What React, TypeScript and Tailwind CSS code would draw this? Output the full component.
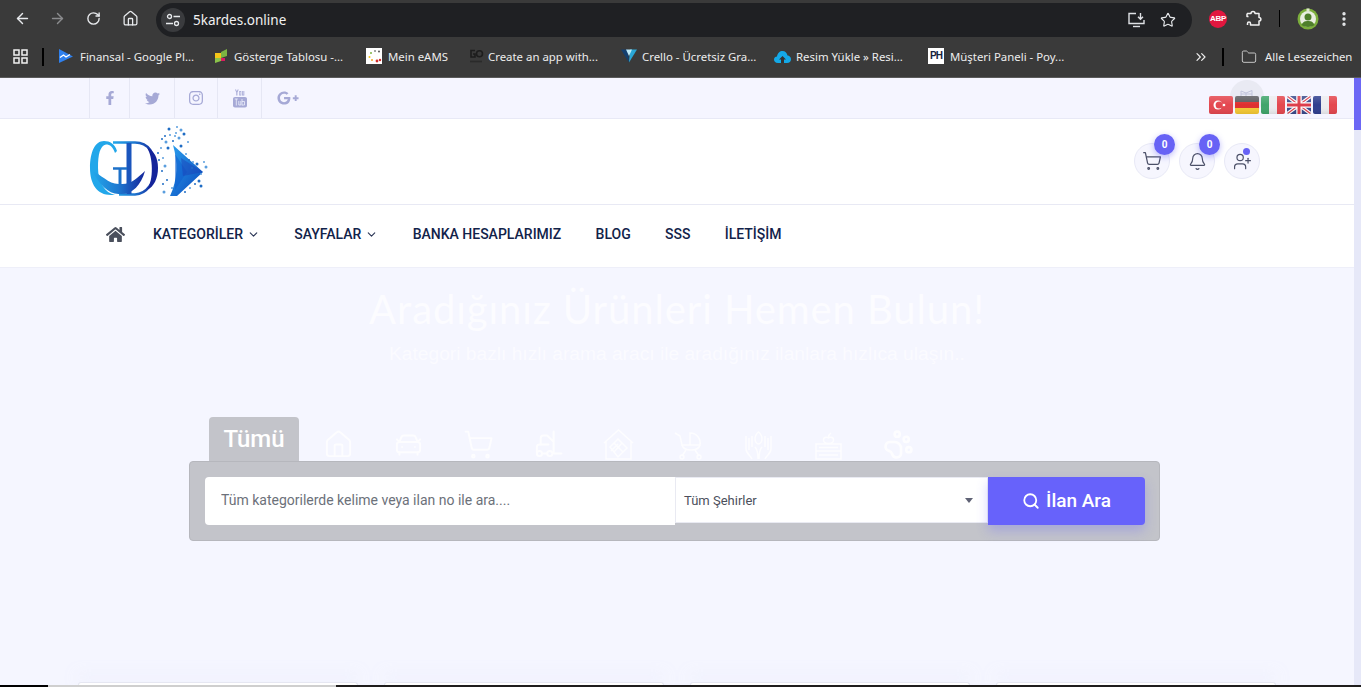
import React from "react";
import { ArrowLeft, ArrowRight, RotateCw, House, Star, EllipsisVertical, ChevronsRight, Folder, ChevronDown, ShoppingCart, Bell, UserPlus, Search, CarFront, Forklift, PawPrint } from "lucide-react";
import { FaFacebookF, FaTwitter, FaInstagram, FaGooglePlusG, FaHome } from "react-icons/fa";

const Tune = () => (
  <svg width="16" height="16" viewBox="0 0 16 16" fill="none" stroke="#e8eaed" strokeWidth="1.3">
    <circle cx="4.5" cy="4.5" r="2" />
    <path d="M8.5 4.5H15M1 11.5H8" />
    <circle cx="11.5" cy="11.5" r="2" />
  </svg>
);

const MonitorArrow = () => (
  <svg width="17" height="16" viewBox="0 0 17 16" fill="none" stroke="#dfe1e5" strokeWidth="1.4">
    <path d="M8 1.500H1V11.500H16V8" />
    <path d="M5 14.500H12" />
    <path d="M12.500 1V7M10 4.800L12.500 7.300L15 4.800" />
  </svg>
);

const Ext = () => (
  <svg width="17" height="17" viewBox="0 0 17 17" fill="none" stroke="#f1f1f1" strokeWidth="1.500" strokeLinejoin="round">
    <path d="M2 3.500H6C6 0.800 10 0.800 10 3.500H14V7.500C16.500 7.500 16.500 11 14 11V15H5.500V13.500C5.500 11.500 2.500 11.500 2.500 13.500V15" />
    <path d="M2 3.500V6.500H3.500" />
  </svg>
);

const Apps = () => (
  <svg width="15" height="15" viewBox="0 0 15 15" fill="none" stroke="#f1f1f1" strokeWidth="1.5">
    <rect x="1" y="1" width="5" height="5" />
    <rect x="9" y="1" width="5" height="5" />
    <rect x="1" y="9" width="5" height="5" />
    <rect x="9" y="9" width="5" height="5" />
  </svg>
);

const Fav1 = () => (
  <svg width="16" height="16" viewBox="0 0 16 16">
    <path d="M1 1L15 8.5L1 15Z" fill="#2f80ed" />
    <path d="M2 9.5L5.5 7L8 9L12 6.5" stroke="#fff" strokeWidth="1.3" fill="none" />
  </svg>
);
const Fav2 = () => (
  <svg width="14" height="16" viewBox="0 0 14 16">
    <rect x="1" y="5" width="6" height="5" fill="#f5c518" />
    <path d="M7 4L13 1V8L7 10Z" fill="#7cb342" />
    <path d="M1 10H7V13L1 15Z" fill="#8bc34a" />
    <rect x="7" y="10" width="4" height="3" fill="#d81b60" />
  </svg>
);
const Fav3 = () => (
  <svg width="16" height="16" viewBox="0 0 16 16">
    <rect width="16" height="16" fill="#fff" />
    <circle cx="9" cy="3" r="1" fill="#888" />
    <circle cx="5" cy="5" r="1" fill="#7cb342" />
    <circle cx="3.5" cy="9" r="1" fill="#f5c518" />
    <circle cx="6" cy="12" r="1" fill="#f5a623" />
    <circle cx="11" cy="13" r="1.4" fill="#d32f2f" />
    <circle cx="14" cy="12" r="1.2" fill="#d32f2f" />
    <circle cx="13" cy="3.5" r="1" fill="#555" />
  </svg>
);
const Fav4 = () => (
  <svg width="16" height="16" viewBox="0 0 16 16" fill="none" stroke="#1d1d1d" strokeWidth="1.6">
    <path d="M7 2.500H3V9H7V6H5" />
    <circle cx="11.500" cy="5.700" r="3" />
    <path d="M2 13.500H14" stroke="#2a2a2a" />
  </svg>
);
const Fav5 = () => (
  <svg width="16" height="16" viewBox="0 0 16 16">
    <path d="M0 1.500H7L8 14.500Z" fill="#143f6e" />
    <path d="M16 1.500H9L8 14.500Z" fill="#2aa7d6" />
    <path d="M5 1.500H11L8 8Z" fill="#bfeaf7" />
  </svg>
);
const Fav6 = () => (
  <svg width="17" height="13" viewBox="0 0 17 13">
    <path d="M4 13C1 13 0 11 0 9.500C0 7.500 1.500 6.500 3 6.500C3.500 3 6 1 8.500 1C11 1 13 3 13.500 5.500C15.500 5.500 17 7.300 17 9.300C17 11.500 15.500 13 13 13Z" fill="#14a9e8" />
    <path d="M8.500 6L12 9.500H10V13H7V9.500H5Z" fill="#333" />
  </svg>
);
const Fav7 = () => (
  <div className="flex h-4 w-4 items-center justify-center bg-white font-['Liberation_Sans',sans-serif] text-[10px] font-bold leading-none tracking-[-1px] text-[#17233f]">PH</div>
);

const Bookmark = ({ icon, label, w, iw = "w-[22px]" }: { icon: React.ReactNode; label: string; w: string; iw?: string }) => (
  <div className={`flex shrink-0 items-center ${w}`}>
    <div className={`flex shrink-0 items-center ${iw}`}>{icon}</div>
    <span className="whitespace-nowrap">{label}</span>
  </div>
);

const Avatar = () => (
  <svg width="22" height="22" viewBox="0 0 22 22">
    <circle cx="11" cy="11" r="10.500" fill="#7cae3c" />
    <circle cx="11" cy="11" r="8" fill="#e9eee0" />
    <circle cx="11" cy="9" r="3.500" fill="#4f7f2b" />
    <path d="M4.500 17C6 13.500 8 13 11 13C14 13 16 13.500 17.500 17C15 19.500 7 19.500 4.500 17Z" fill="#4f7f2b" />
    <rect x="9.500" y="0.500" width="3" height="3" fill="#dfe8cf" />
  </svg>
);

const Yt = () => (
  <svg width="14" height="19" viewBox="0 0 14 19" fill="#a6a9d6">
    <path d="M2 0.500L3.300 3.500V6.500H4.400V3.500L5.700 0.500H4.600L3.850 2.500L3.100 0.500Z" />
    <path d="M6.200 2H8.200V6.500H6.200ZM6.900 2.700V5.800H7.500V2.700Z" fillRule="evenodd" />
    <path d="M8.900 2H9.800V5.700H10.400V2H11.300V6.500H8.900Z" />
    <path d="M2 8H12C13.200 8 14 8.800 14 10V16.500C14 17.700 13.200 18.500 12 18.500H2C0.800 18.500 0 17.700 0 16.500V10C0 8.800 0.800 8 2 8Z" />
    <path d="M1.800 10H4.800M3.300 10V16.500M5.800 12V16H7.800V12M9 10V16.500M9 12.500H11.500V16H9" stroke="#eef0fb" strokeWidth="0.800" fill="none" />
  </svg>
);

const Social = ({ children, w }: { children: React.ReactNode; w: string }) => (
  <div className={`flex h-full items-center justify-center border-l border-[#e6e7f4] text-[#a6a9d6] ${w}`}>{children}</div>
);

const Gloss = ({ id }: { id: string }) => (
  <>
    <defs>
      <linearGradient id={id} x1="0" y1="0" x2="0" y2="1">
        <stop offset="0" stopColor="#fff" stopOpacity="0.16" />
        <stop offset="0.5" stopColor="#fff" stopOpacity="0" />
        <stop offset="1" stopColor="#000" stopOpacity="0.08" />
      </linearGradient>
    </defs>
    <rect width="24" height="18" fill={`url(#${id})`} />
  </>
);

const Flags = () => (
  <div className="flex gap-[2px]">
    <svg width="24" height="18" viewBox="0 0 24 18" className="rounded-[2px]">
      <rect width="24" height="18" fill="#e4474f" />
      <circle cx="9" cy="9" r="4.500" fill="#fff" />
      <circle cx="10.200" cy="9" r="3.600" fill="#e4474f" />
      <circle cx="15" cy="9" r="1.300" fill="#fff" />
      <Gloss id="g1" />
    </svg>
    <svg width="24" height="18" viewBox="0 0 24 18" className="rounded-[2px]">
      <rect width="24" height="6" fill="#5c5c60" />
      <rect y="6" width="24" height="6" fill="#df2f2f" />
      <rect y="12" width="24" height="6" fill="#f5c934" />
      <Gloss id="g2" />
    </svg>
    <svg width="24" height="18" viewBox="0 0 24 18" className="rounded-[2px]">
      <rect width="8" height="18" fill="#3fa56b" />
      <rect x="8" width="8" height="18" fill="#ececf0" />
      <rect x="16" width="8" height="18" fill="#e4474f" />
      <Gloss id="g3" />
    </svg>
    <svg width="24" height="18" viewBox="0 0 24 18" className="rounded-[2px]">
      <rect width="24" height="18" fill="#3b4a8c" />
      <path d="M0 0L24 18M24 0L0 18" stroke="#fff" strokeWidth="3.500" />
      <path d="M0 0L24 18M24 0L0 18" stroke="#dd3c4a" strokeWidth="1.200" />
      <path d="M12 0V18M0 9H24" stroke="#fff" strokeWidth="5.500" />
      <path d="M12 0V18M0 9H24" stroke="#dd3c4a" strokeWidth="3" />
      <Gloss id="g4" />
    </svg>
    <svg width="24" height="18" viewBox="0 0 24 18" className="rounded-[2px]">
      <rect width="8" height="18" fill="#2f3f8f" />
      <rect x="8" width="8" height="18" fill="#ececf0" />
      <rect x="16" width="8" height="18" fill="#e4474f" />
      <Gloss id="g5" />
    </svg>
  </div>
);

const Logo = () => (
  <svg width="122" height="72" viewBox="0 0 122 72" fill="none">
    <defs>
      <linearGradient id="lg" x1="0" y1="0" x2="1" y2="0">
        <stop offset="0" stopColor="#22a7ea" />
        <stop offset="0.5" stopColor="#1e78d0" />
        <stop offset="1" stopColor="#14249a" />
      </linearGradient>
      <linearGradient id="la" x1="0" y1="0" x2="1" y2="1">
        <stop offset="0" stopColor="#2aa0ef" />
        <stop offset="1" stopColor="#0a48bb" />
      </linearGradient>
    </defs>
    <path d="M28 27C26 20 21 17 15 17C6 17 1 28 1 44C1 60 8 71 22 71H26C16 69 9 58 9 44C9 30 11 22 17 20.500C21 20.500 24 23 26 29Z" fill="#22a7ea" />
    <path d="M24 18.500H46C60 18.500 66 30 66 44C66 58 58 70 46 70.500H30" stroke="url(#lg)" strokeWidth="2.500" />
    <path d="M58 24C64 32 65 56 58 66C65 63 69 54 69 44C69 33 65 27 58 24Z" fill="#14249a" />
    <path d="M40 19V70" stroke="#1a55bd" strokeWidth="5" />
    <path d="M31 44V68" stroke="#1c70c9" strokeWidth="3" />
    <path d="M24 44.500H38" stroke="#1c70c9" strokeWidth="2.500" />
    <path d="M3 47C12 50 20 61 31 60C42 61 48 54 56 47C52 62 42 71 31 70C20 71 10 60 3 47Z" fill="url(#lg)" />
    <path d="M84 21L114 48L88 72H81C89 55 89 38 84 21Z" fill="url(#la)" />
    <path d="M86 30L98 48L86 66Z" fill="#0f5fd0" opacity="0.55" />
    <path d="M92 34L114 48L94 52Z" fill="#1a3fb5" opacity="0.45" />
    {[[80,5],[87,9],[76,12],[90,14],[84,17],[72,24],[92,22],[97,30],[69,29],[77,18],[100,36],[104,38],[108,40],[74,34],[70,36],[76,42],[73,47],[112,50],[110,57],[101,64],[78,56],[75,68],[96,68],[81,11],[95,10],[88,3],[73,15],[117,43],[103,44],[115,38],[79,24],[86,12],[74,60],[92,6],[106,60],[83,64],[112,62],[99,18]].map(([x, y], i) => (
      <circle key={i} cx={x} cy={y} r={i % 3 === 0 ? 1.500 : 1} fill={i % 2 ? "#5a9ede" : "#1f6cc4"} />
    ))}
  </svg>
);

const IconBtn = ({ children, badge, dot }: { children: React.ReactNode; badge?: boolean; dot?: boolean }) => (
  <div className="relative flex h-9 w-9 items-center justify-center rounded-full border border-[#e8e9f6] bg-[#f6f6fe] text-[#4b5068]">
    {children}
    {badge && (
      <span className="absolute right-[-6px] top-[-10px] flex h-[21px] w-[21px] items-center justify-center rounded-full bg-[#6762f5] text-[10px] font-bold text-white shadow-[0_2px_6px_rgba(103,98,245,0.45)]">0</span>
    )}
    {dot && <span className="absolute right-[9px] top-[4px] h-[7px] w-[7px] rounded-full bg-[#6762f5]" />}
  </div>
);

const NavItem = ({ label, chevron }: { label: string; chevron?: boolean }) => (
  <div className="flex items-center gap-[4px] whitespace-nowrap">
    <span>{label}</span>
    {chevron && <ChevronDown size={13} strokeWidth={2} className="text-[#2a3555]" />}
  </div>
);

const stroke = { fill: "none", stroke: "#fdfdff", strokeWidth: 1.500 };

const IconGridHouse = () => (
  <svg width="31" height="31" viewBox="0 0 31 31" {...stroke}>
    <path d="M1 14L15.500 1L30 14M3 12V30H28V12" />
    <path d="M7 18L15 10L24 19L15 28ZM11 14L20 23M15 10L7 18M19 14L11 23M8 22L15 15" />
  </svg>
);
const IconStroller = () => (
  <svg width="31" height="31" viewBox="0 0 31 31" {...stroke}>
    <path d="M2 4L7 7L9 16H27C28 10 24 4 17 4V16" />
    <path d="M9 16C10 20 13 21 18 21C23 21 26 20 27 16" />
    <path d="M13 21L9 27M22 21L26 27" />
    <circle cx="9" cy="28" r="2" />
    <circle cx="26" cy="28" r="2" />
  </svg>
);
const IconHands = () => (
  <svg width="31" height="31" viewBox="0 0 31 31" {...stroke}>
    <path d="M15.500 3C18 5 19 8 19 10C19 13 17 15 15.500 15C14 15 12 13 12 10C12 8 13 5 15.500 3Z" />
    <path d="M9 7V18M6 9V21M3 7V20C3 24 7 26 9 30M22 7V18M25 9V21M28 7V20C28 24 24 26 22 30" />
    <path d="M12 18C14 20 15 24 15 30M19 18C17 20 16 24 16 30" />
  </svg>
);
const IconBooks = () => (
  <svg width="31" height="31" viewBox="0 0 31 31" {...stroke}>
    <path d="M15.500 9C12.500 7 10.500 9 10.500 11C10.500 13 12.500 15 15.500 14.500C18.500 15 20.500 13 20.500 11C20.500 9 18.500 7 15.500 9ZM15.500 8C15.500 6 16.500 5 18 4" />
    <path d="M3 15H28V22H3ZM3 22V30H28V22M6 18.500H25M6 26H25" />
  </svg>
);

export default function App() {
  return (
    <div className="flex h-[687px] w-[1361px] flex-col overflow-hidden bg-[#f5f6ff] font-['Roboto',sans-serif]">
      {/* browser chrome */}
      <div className="flex h-[37px] shrink-0 items-end bg-[#3a3a3a] text-[#e8eaed]">
        <div className="flex h-[37px] w-[156px] shrink-0 items-center pl-[14px]">
          <ArrowLeft size={17} strokeWidth={2} />
          <ArrowRight size={17} strokeWidth={2} className="ml-[18px] text-[#8b8c8e]" />
          <RotateCw size={15} strokeWidth={2.200} className="ml-[20px]" />
          <House size={17} strokeWidth={1.800} className="ml-[21px]" />
        </div>
        <div className="flex h-[34px] w-[1036px] shrink-0 items-center rounded-full bg-[#1f2023] pl-[5px] pr-[16px]">
          <div className="flex h-6 w-6 items-center justify-center rounded-full bg-[#3a3b3e]"><Tune /></div>
          <span className="ml-[8px] font-['Noto_Sans',sans-serif] text-[13.500px] text-[#f1f1f1]">5kardes.online</span>
          <div className="ml-auto flex items-center gap-[15px]">
            <MonitorArrow />
            <Star size={16} strokeWidth={1.700} />
          </div>
        </div>
        <div className="flex h-[37px] flex-1 items-center pl-[17px]">
          <div className="flex h-[18px] w-[18px] items-center justify-center rounded-full bg-[#e2173f] font-['Liberation_Sans',sans-serif] text-[8px] font-bold tracking-[-0.3px] text-white">ABP</div>
          <div className="ml-[18px]"><Ext /></div>
          <div className="ml-[17px] h-[17px] w-[1px] bg-black" />
          <div className="ml-[17px]"><Avatar /></div>
          <EllipsisVertical size={18} strokeWidth={2.500} className="ml-[16px]" />
        </div>
      </div>
      <div className="flex h-[41px] shrink-0 items-center border-b border-[#5a5a5a] bg-[#3a3a3a] pb-[1px] font-['Noto_Sans',sans-serif] text-[11.400px] text-[#ededed]">
        <div className="ml-[13px]"><Apps /></div>
        <div className="ml-[14px] mr-[14px] h-[18px] w-[2px] bg-black" />
        <Bookmark w="w-[156px]" icon={<Fav1 />} label="Finansal - Google Pl..." />
        <Bookmark w="w-[152px]" iw="w-[20px]" icon={<Fav2 />} label="Gösterge Tablosu -..." />
        <Bookmark w="w-[102px]" icon={<Fav3 />} label="Mein eAMS" />
        <Bookmark w="w-[153px]" iw="w-[20px]" icon={<Fav4 />} label="Create an app with..." />
        <Bookmark w="w-[153px]" iw="w-[21px]" icon={<Fav5 />} label="Crello - Ücretsiz Gra..." />
        <Bookmark w="w-[154px]" icon={<Fav6 />} label="Resim Yükle » Resi..." />
        <Bookmark w="w-[265px]" icon={<Fav7 />} label="Müşteri Paneli - Poy..." />
        <ChevronsRight size={16} strokeWidth={1.800} />
        <div className="ml-[13px] h-[18px] w-[2px] bg-black" />
        <Folder size={16} strokeWidth={1.400} className="ml-[17px] text-[#cfcfcf]" />
        <span className="ml-[8px] whitespace-nowrap">Alle Lesezeichen</span>
      </div>

      <div className="flex min-h-0 flex-1">
        <main className="flex min-w-0 flex-1 flex-col">
          {/* social bar */}
          <div className="relative flex h-[41px] shrink-0 items-center border-b border-[#e8e9f6] bg-[#f5f5ff] pl-[89px]">
            <Social w="w-[40px]"><FaFacebookF size={14} /></Social>
            <Social w="w-[45px]"><FaTwitter size={15} /></Social>
            <Social w="w-[43px]"><FaInstagram size={16} /></Social>
            <Social w="w-[44px]"><Yt /></Social>
            <div className="flex h-full w-[52px] items-center justify-center border-l border-[#e6e7f4] text-[#a6a9d6]"><FaGooglePlusG size={22} /></div>
            <div className="absolute left-[1230px] top-[2px] flex h-[34px] w-[34px] justify-center rounded-full bg-[#e9eaf3] pt-[9px]">
              <svg width="14" height="10" viewBox="0 0 14 10" fill="none" stroke="#c2c5dc" strokeWidth="1">
                <path d="M1 9V2L6 4V9M6 4L12 1.500V9M1 5H12" />
              </svg>
            </div>
            <div className="absolute left-[1209px] top-[18px]"><Flags /></div>
          </div>
          {/* logo row */}
          <div className="flex h-[86px] shrink-0 items-end justify-between border-b border-[#e8e9f4] bg-white pl-[89px] pr-[94px]">
            <div className="mb-[8px]"><Logo /></div>
            <div className="mb-[25px] flex gap-[9px]">
              <IconBtn badge><ShoppingCart size={20} strokeWidth={1.500} /></IconBtn>
              <IconBtn badge><Bell size={19} strokeWidth={1.500} /></IconBtn>
              <IconBtn dot><UserPlus size={19} strokeWidth={1.500} /></IconBtn>
            </div>
          </div>
          {/* nav */}
          <div className="flex h-[63px] shrink-0 items-center gap-[34.300px] border-b border-[#eeeff9] bg-white pb-[3px] pl-[106px] text-[14px] font-medium text-[#12234a]">
            <FaHome size={19} className="mr-[-6.300px] text-[#4a4f5c]" />
            <NavItem label="KATEGORİLER" chevron />
            <NavItem label="SAYFALAR" chevron />
            <NavItem label="BANKA HESAPLARIMIZ" />
            <NavItem label="BLOG" />
            <NavItem label="SSS" />
            <NavItem label="İLETİŞİM" />
          </div>
          {/* hero */}
          <div className="flex min-h-0 flex-1 flex-col bg-[#f5f6ff]">
            <h1 className="mt-[16px] text-center font-['Lato',sans-serif] text-[40px] font-normal leading-[50px] tracking-[0.9px] text-[#fcfcff]">Aradığınız Ürünleri Hemen Bulun!</h1>
            <p className="mt-[6px] text-center font-['Liberation_Sans',sans-serif] text-[19.200px] leading-[28px] text-[#fbfbff]">Kategori bazlı hızlı arama aracı ile aradığınız ilanlara hızlıca ulaşın..</p>
            <div className="ml-[209px] mt-[49px] flex h-[44px] items-stretch">
              <div className="flex w-[90px] items-center justify-center rounded-t bg-[#c3c4ca] text-[24px] font-medium text-white">Tümü</div>
              <div className="ml-[4px] flex items-center text-[#fdfdff]">
                {[
                  <House key="a" size={31} strokeWidth={1.500} />,
                  <CarFront key="b" size={31} strokeWidth={1.500} />,
                  <ShoppingCart key="c" size={31} strokeWidth={1.500} />,
                  <Forklift key="d" size={31} strokeWidth={1.500} />,
                  <IconGridHouse key="e" />,
                  <IconStroller key="f" />,
                  <IconHands key="g" />,
                  <IconBooks key="h" />,
                  <PawPrint key="i" size={31} strokeWidth={2} />,
                ].map((icon, i) => (
                  <div key={i} className="flex w-[70px] justify-center pt-[10px]">{icon}</div>
                ))}
              </div>
            </div>
            <div className="ml-[189px] flex h-[80px] w-[971px] items-center rounded border border-[#b6b7bd] bg-[#c3c4ca] pl-[15px]">
              <input
                readOnly
                placeholder="Tüm kategorilerde kelime veya ilan no ile ara...."
                className="h-[48px] w-[470px] shrink-0 rounded-l bg-white pb-[2px] pl-[16px] text-[14px] outline-none placeholder:text-[#6c717a]"
              />
              <div className="mt-[15px] flex h-[46px] w-[313px] shrink-0 items-center justify-between self-start border border-[#e9eaf2] bg-white pl-[8px] pr-[14px] pt-[1px] text-[13px] text-[#4b4f5c]">
                <span>Tüm Şehirler</span>
                <span className="h-0 w-0 border-x-[4px] border-t-[5px] border-x-transparent border-t-[#5f6275]" />
              </div>
              <div className="flex h-[48px] w-[157px] shrink-0 items-center justify-center gap-[6px] rounded-r bg-[#6762fb] text-[19px] font-medium text-white shadow-[0_6px_12px_rgba(103,98,251,0.3)]">
                <Search size={18} strokeWidth={2.400} />
                <span>İlan Ara</span>
              </div>
            </div>
            <div className="mt-auto flex gap-[26px] pl-[78px]">
              {[0, 1, 2, 3].map((n) => (
                <div key={n} className="h-[3px] w-[280px] rounded-t-[5px] border-x border-t border-[#e6e7f2] bg-white shadow-[0_-6px_14px_rgba(225,227,245,0.55)]" />
              ))}
            </div>
          </div>
        </main>
        {/* scrollbar */}
        <div className="w-[7px] shrink-0 bg-[#e6e8f8]">
          <div className="h-[52px] bg-[#6c67f5]" />
        </div>
      </div>
      <div className="flex h-[2px] shrink-0 bg-[#1f1d1d]">
        <div className="w-[48px] bg-black" />
        <div className="w-[288px] bg-[#cfcfcf]" />
      </div>
    </div>
  );
}
